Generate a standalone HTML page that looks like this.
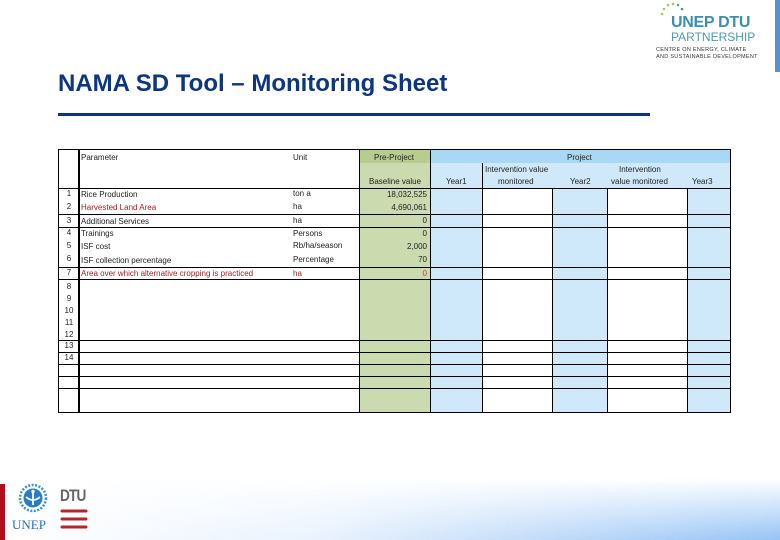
<!DOCTYPE html>
<html><head><meta charset="utf-8"><style>
*{margin:0;padding:0;box-sizing:border-box}
body{width:780px;height:540px;position:relative;overflow:hidden;background:#fff;font-family:"Liberation Sans",sans-serif}
.a{position:absolute}
.t{position:absolute;font-size:8px;color:#222;white-space:nowrap;line-height:10px}
.n{position:absolute;font-size:8px;color:#222;line-height:10px;left:59px;width:20px;text-align:center}
.r{color:#9b1c1c}
.h{position:absolute;height:1px;background:#000;left:58px;width:673px}
.v{position:absolute;width:1px;background:#000;top:149px;height:264px}
</style></head><body>
<div class="a" style="left:0;top:478px;width:780px;height:62px;background:linear-gradient(90deg,rgba(255,255,255,0) 0%,rgba(225,237,252,.7) 40%,rgba(150,195,245,1) 100%);-webkit-mask:linear-gradient(180deg,transparent,#000)"></div>
<div class="a" style="left:0;top:484px;width:5px;height:56px;background:#b00d1e"></div>
<svg class="a" style="left:10px;top:481px" width="46" height="38" viewBox="0 0 46 38">
<circle cx="23" cy="17" r="13" fill="none" stroke="#3d8fcf" stroke-width="2.5" stroke-dasharray="2 1.5"/>
<circle cx="23" cy="17" r="9.5" fill="#2b7cc4"/>
<path d="M16 16 Q23 22 30 16 M23 11 V24" stroke="#fff" stroke-width="1.8" fill="none"/>
<circle cx="23" cy="10.5" r="1.7" fill="#fff"/>
</svg>
<div class="a" style="left:12px;top:517px;font-family:'Liberation Serif',serif;font-size:13px;color:#2b6fb8">UNEP</div>
<div class="a" style="left:60px;top:486px;font-size:17px;font-weight:bold;color:#666;letter-spacing:-1px;transform:scaleX(.8);transform-origin:left">DTU</div>
<svg class="a" style="left:59px;top:507px" width="30" height="26"><g stroke="#b5252c" stroke-width="3" stroke-linecap="round"><path d="M3 4H27M3 12H27M3 20H27"/></g></svg>
<svg class="a" style="left:658px;top:0" width="30" height="20"><g fill="#9cc96b"><circle cx="4" cy="14" r="1.3"/><circle cx="6" cy="9" r="1.3"/><circle cx="10" cy="5" r="1.3"/><circle cx="15" cy="4" r="1.3"/><circle cx="20" cy="5" r="1.3" fill="#5aa88a"/><circle cx="24" cy="9" r="1.3" fill="#3a8fa8"/></g></svg>
<div class="a" style="left:671px;top:14px;font-size:16px;font-weight:bold;color:#3a8fb0;letter-spacing:-.3px">UNEP DTU</div>
<div class="a" style="left:671px;top:30px;font-size:12px;color:#4a9ab8">PARTNERSHIP</div>
<div class="a" style="left:656px;top:47px;font-size:5.5px;color:#333;line-height:7px;letter-spacing:.3px">CENTRE ON ENERGY, CLIMATE<br>AND SUSTAINABLE DEVELOPMENT</div>
<div class="a" style="left:775px;top:0;width:5px;height:72px;background:#5b8fd0"></div>
<div class="a" style="left:58px;top:70px;font-size:24px;font-weight:bold;color:#0d3580">NAMA SD Tool – Monitoring Sheet</div>
<div class="a" style="left:58px;top:113px;width:592px;height:3px;background:#0d3580"></div>
<div class="a" style="left:359px;top:149px;width:71px;height:264px;background:#ccdab0"></div>
<div class="a" style="left:359px;top:149px;width:71px;height:14px;background:#b9cc90"></div>
<div class="a" style="left:430px;top:149px;width:301px;height:264px;background:#cfe9fb"></div>
<div class="a" style="left:430px;top:149px;width:301px;height:14px;background:#a9d8f6"></div>
<div class="a" style="left:483px;top:188px;width:69px;height:225px;background:#fff"></div>
<div class="a" style="left:608px;top:188px;width:79px;height:225px;background:#fff"></div>
<div class="h" style="top:149px"></div>
<div class="h" style="top:188px"></div>
<div class="h" style="top:214px"></div>
<div class="h" style="top:227px"></div>
<div class="h" style="top:267px"></div>
<div class="h" style="top:279px"></div>
<div class="h" style="top:340px"></div>
<div class="h" style="top:352px"></div>
<div class="h" style="top:364px"></div>
<div class="h" style="top:376px"></div>
<div class="h" style="top:388px"></div>
<div class="h" style="top:412px"></div>
<div class="v" style="left:58px"></div>
<div class="v" style="left:78px;width:2px"></div>
<div class="v" style="left:359px"></div>
<div class="v" style="left:430px"></div>
<div class="v" style="left:482px;top:163px;height:250px"></div>
<div class="v" style="left:552px;top:188px;height:225px"></div>
<div class="v" style="left:607px;top:188px;height:225px"></div>
<div class="v" style="left:687px;top:188px;height:225px"></div>
<div class="v" style="left:730px"></div>
<div class="t" style="left:81px;top:153px">Parameter</div>
<div class="t" style="left:293px;top:153px">Unit</div>
<div class="t" style="left:374px;top:153px">Pre-Project</div>
<div class="t" style="left:567px;top:153px">Project</div>
<div class="t" style="left:369px;top:177px">Baseline value</div>
<div class="t" style="left:446px;top:177px">Year1</div>
<div class="t" style="left:485px;top:165px">Intervention value</div>
<div class="t" style="left:498px;top:177px">monitored</div>
<div class="t" style="left:570px;top:177px">Year2</div>
<div class="t" style="left:619px;top:165px">Intervention</div>
<div class="t" style="left:611px;top:177px">value monitored</div>
<div class="t" style="left:692px;top:177px">Year3</div>
<div class="n" style="top:189px">1</div>
<div class="n" style="top:202px">2</div>
<div class="n" style="top:216px">3</div>
<div class="n" style="top:228px">4</div>
<div class="n" style="top:241px">5</div>
<div class="n" style="top:254px">6</div>
<div class="n" style="top:268px">7</div>
<div class="n" style="top:282px">8</div>
<div class="n" style="top:294px">9</div>
<div class="n" style="top:306px">10</div>
<div class="n" style="top:318px">11</div>
<div class="n" style="top:330px">12</div>
<div class="n" style="top:341px">13</div>
<div class="n" style="top:353px">14</div>
<div class="t" style="left:81px;top:190px">Rice Production</div>
<div class="t r" style="left:81px;top:203px">Harvested Land Area</div>
<div class="t" style="left:81px;top:217px">Additional Services</div>
<div class="t" style="left:81px;top:229px">Trainings</div>
<div class="t" style="left:81px;top:242px">ISF cost</div>
<div class="t" style="left:81px;top:256px">ISF collection percentage</div>
<div class="t r" style="left:81px;top:269px">Area over which alternative cropping is practiced</div>
<div class="t" style="left:293px;top:189px">ton a</div>
<div class="t" style="left:293px;top:202px">ha</div>
<div class="t" style="left:293px;top:216px">ha</div>
<div class="t" style="left:293px;top:229px">Persons</div>
<div class="t" style="left:293px;top:241px">Rb/ha/season</div>
<div class="t" style="left:293px;top:255px">Percentage</div>
<div class="t r" style="left:293px;top:269px">ha</div>
<div class="t" style="left:362px;top:190px;width:65px;text-align:right">18,032,525</div>
<div class="t" style="left:362px;top:203px;width:65px;text-align:right">4,690,061</div>
<div class="t" style="left:362px;top:216px;width:65px;text-align:right">0</div>
<div class="t" style="left:362px;top:229px;width:65px;text-align:right">0</div>
<div class="t" style="left:362px;top:242px;width:65px;text-align:right">2,000</div>
<div class="t" style="left:362px;top:255px;width:65px;text-align:right">70</div>
<div class="t r" style="left:362px;top:269px;width:65px;text-align:right;color:#d03a2a">0</div>
</body></html>
